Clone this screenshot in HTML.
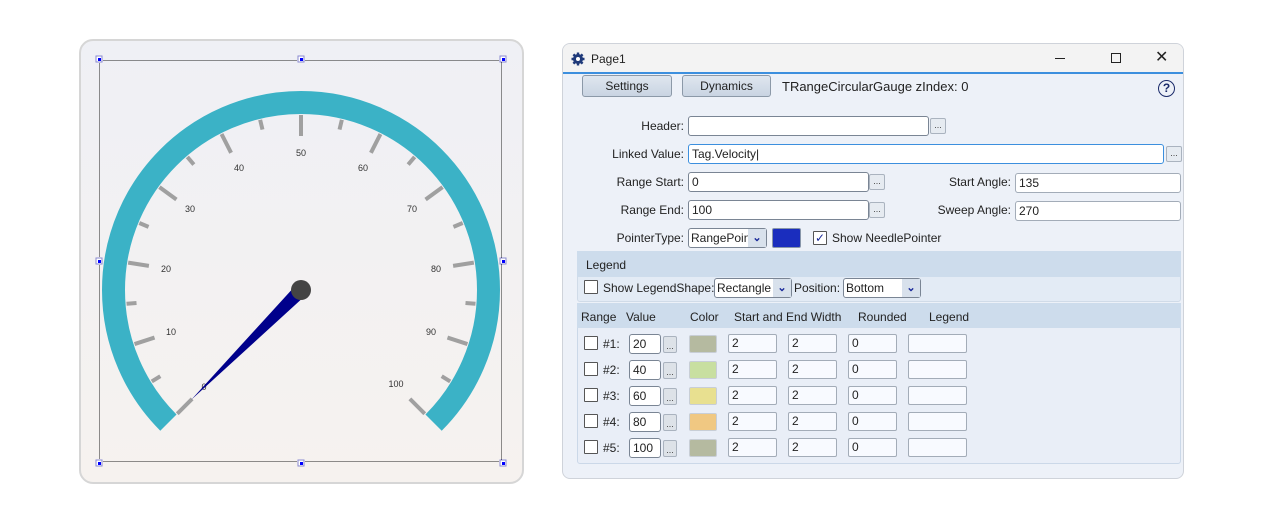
<!DOCTYPE html>
<html><head><meta charset="utf-8"><style>
*{box-sizing:border-box;margin:0;padding:0}
body{width:1263px;height:522px;background:#fff;position:relative;overflow:hidden;font-family:"Liberation Sans",sans-serif;font-size:12px;color:#222}
.a{position:absolute}
.card{left:79px;top:39px;width:445px;height:445px;border:2px solid #d6d6d6;border-radius:14px;background:linear-gradient(#eff0f5,#f6f2ef)}
.win{left:562px;top:43px;width:622px;height:436px;border:1px solid #cfd3da;border-radius:8px;background:#edf1f8;overflow:hidden}
.tb{left:0;top:0;width:620px;height:30px;background:#f3f3f3;border-bottom:2px solid #3c8fde}
.btn{border:1px solid #8c99a8;border-radius:3px;background:linear-gradient(#dfe6ef,#c9d4e2);text-align:center;line-height:20px;font-size:12px}
.inp{border:1px solid #7a8594;border-radius:3px;background:#fff;height:20px;line-height:18px;padding-left:3px;font-size:12px}
.dot{border:1px solid #aab3bf;border-radius:2px;background:#e6ebf1;font-size:9px;text-align:center;line-height:12px;color:#444}
.lbl{text-align:right;line-height:20px}
.cb{width:14px;height:14px;border:1px solid #555;background:#fff;border-radius:1px}
.sel{border:1px solid #7a8594;border-radius:3px;background:#fff;height:20px;line-height:18px;padding-left:2px}
.sel i{position:absolute;right:0;top:0;width:18px;height:18px;background:#d8e1ec;color:#1a2a9a;font-style:normal;text-align:center;font-size:11px;font-weight:bold}
.si{border:1px solid #a3acb8;border-radius:2px;background:#f8faff;height:19px;line-height:17px;padding-left:3px}
.sw{border:1px solid #c8ced6;border-radius:2px;height:18px}
</style></head><body>
<div class="a card"></div>
<svg class="a" style="left:0;top:0" width="530" height="490">
<rect x="99.5" y="60.5" width="402" height="401" fill="none" stroke="#222" stroke-dasharray="1,1"/>
<g fill="#fff" stroke="#8a8ad0">
<rect x="96" y="56" width="6" height="6"/><rect x="298" y="56" width="6" height="6"/><rect x="500" y="56" width="6" height="6"/>
<rect x="96" y="258" width="6" height="6"/><rect x="500" y="258" width="6" height="6"/>
<rect x="96" y="460" width="6" height="6"/><rect x="298" y="460" width="6" height="6"/><rect x="500" y="460" width="6" height="6"/>
</g>
<g fill="#00f"><rect x="98" y="58" width="3" height="3"/><rect x="300" y="58" width="3" height="3"/><rect x="502" y="58" width="3" height="3"/><rect x="98" y="260" width="3" height="3"/><rect x="502" y="260" width="3" height="3"/><rect x="98" y="462" width="3" height="3"/><rect x="300" y="462" width="3" height="3"/><rect x="502" y="462" width="3" height="3"/></g>
<path d="M168.4 422.6 A187.5 187.5 0 1 1 433.6 422.6" fill="none" stroke="#3bb2c6" stroke-width="23"/>
<g stroke="#a0a0a0" stroke-width="4">
<line x1="455" y1="290" x2="476" y2="290" transform="rotate(135 301 290)"/>
<line x1="466" y1="290" x2="476" y2="290" transform="rotate(148.5 301 290)"/>
<line x1="455" y1="290" x2="476" y2="290" transform="rotate(162 301 290)"/>
<line x1="466" y1="290" x2="476" y2="290" transform="rotate(175.5 301 290)"/>
<line x1="455" y1="290" x2="476" y2="290" transform="rotate(189 301 290)"/>
<line x1="466" y1="290" x2="476" y2="290" transform="rotate(202.5 301 290)"/>
<line x1="455" y1="290" x2="476" y2="290" transform="rotate(216 301 290)"/>
<line x1="466" y1="290" x2="476" y2="290" transform="rotate(229.5 301 290)"/>
<line x1="455" y1="290" x2="476" y2="290" transform="rotate(243 301 290)"/>
<line x1="466" y1="290" x2="476" y2="290" transform="rotate(256.5 301 290)"/>
<line x1="455" y1="290" x2="476" y2="290" transform="rotate(270 301 290)"/>
<line x1="466" y1="290" x2="476" y2="290" transform="rotate(283.5 301 290)"/>
<line x1="455" y1="290" x2="476" y2="290" transform="rotate(297 301 290)"/>
<line x1="466" y1="290" x2="476" y2="290" transform="rotate(310.5 301 290)"/>
<line x1="455" y1="290" x2="476" y2="290" transform="rotate(324 301 290)"/>
<line x1="466" y1="290" x2="476" y2="290" transform="rotate(337.5 301 290)"/>
<line x1="455" y1="290" x2="476" y2="290" transform="rotate(351 301 290)"/>
<line x1="466" y1="290" x2="476" y2="290" transform="rotate(364.5 301 290)"/>
<line x1="455" y1="290" x2="476" y2="290" transform="rotate(378 301 290)"/>
<line x1="466" y1="290" x2="476" y2="290" transform="rotate(391.5 301 290)"/>
<line x1="455" y1="290" x2="476" y2="290" transform="rotate(405 301 290)"/>
</g>
<g font-family="Liberation Sans,sans-serif" font-size="9" fill="#333" text-anchor="middle">
<text x="204" y="390">0</text><text x="171" y="335">10</text><text x="166" y="272">20</text><text x="190" y="212">30</text><text x="239" y="171">40</text><text x="301" y="156">50</text><text x="363" y="171">60</text><text x="412" y="212">70</text><text x="436" y="272">80</text><text x="431" y="335">90</text><text x="396" y="387">100</text>
</g>
<polygon points="296,285 306,295 191,400" fill="#00008b"/>
<circle cx="301" cy="290" r="10" fill="#444"/>
</svg>

<div class="a win">
<div class="a tb"></div>
<svg class="a" style="left:8px;top:8px" width="14" height="14" viewBox="0 0 14 14"><circle cx="7" cy="7" r="5" fill="#1f3a7a"/><g stroke="#1f3a7a" stroke-width="2.4"><line x1="7" y1="0.5" x2="7" y2="13.5"/><line x1="0.5" y1="7" x2="13.5" y2="7"/><line x1="2.4" y1="2.4" x2="11.6" y2="11.6"/><line x1="11.6" y1="2.4" x2="2.4" y2="11.6"/></g><circle cx="7" cy="7" r="2" fill="#fff"/></svg>
<div class="a" style="left:28px;top:8px;font-size:12px">Page1</div>
<div class="a" style="left:492px;top:14px;width:10px;height:1px;background:#222"></div>
<div class="a" style="left:548px;top:9px;width:10px;height:10px;border:1px solid #222"></div>
<div class="a" style="left:592px;top:3px;font-size:16px;color:#222">✕</div>

<div class="a btn" style="left:19px;top:31px;width:90px;height:22px">Settings</div>
<div class="a btn" style="left:119px;top:31px;width:89px;height:22px">Dynamics</div>
<div class="a" style="left:219px;top:35px;font-size:13px">TRangeCircularGauge zIndex: 0</div>
<div class="a" style="left:595px;top:36px;width:17px;height:17px;border:1.5px solid #1a2a6a;border-radius:50%;text-align:center;font-size:12px;font-weight:bold;line-height:14px;color:#1a2a6a">?</div>

<div class="a lbl" style="left:0;top:72px;width:121px">Header:</div>
<div class="a inp" style="left:125px;top:72px;width:241px"></div>
<div class="a dot" style="left:367px;top:74px;width:16px;height:16px">...</div>

<div class="a lbl" style="left:0;top:100px;width:121px">Linked Value:</div>
<div class="a inp" style="left:125px;top:100px;width:476px;border-color:#3c8fde">Tag.Velocity|</div>
<div class="a dot" style="left:603px;top:102px;width:16px;height:16px">...</div>

<div class="a lbl" style="left:0;top:128px;width:121px">Range Start:</div>
<div class="a inp" style="left:125px;top:128px;width:181px">0</div>
<div class="a dot" style="left:306px;top:130px;width:16px;height:16px">...</div>
<div class="a lbl" style="left:340px;top:128px;width:108px">Start Angle:</div>
<div class="a inp" style="left:452px;top:129px;width:166px;border-color:#a3acb8">135</div>

<div class="a lbl" style="left:0;top:156px;width:121px">Range End:</div>
<div class="a inp" style="left:125px;top:156px;width:181px">100</div>
<div class="a dot" style="left:306px;top:158px;width:16px;height:16px">...</div>
<div class="a lbl" style="left:340px;top:156px;width:108px">Sweep Angle:</div>
<div class="a inp" style="left:452px;top:157px;width:166px;border-color:#a3acb8">270</div>

<div class="a lbl" style="left:0;top:184px;width:121px">PointerType:</div>
<div class="a sel" style="left:125px;top:184px;width:79px">RangePoin<i>⌄</i></div>
<div class="a" style="left:209px;top:184px;width:29px;height:20px;background:#1a2dbe;border:1px solid #8896aa;border-radius:2px"></div>
<div class="a cb" style="left:250px;top:187px;text-align:center;line-height:12px;font-size:12px;color:#1a2a9a">✓</div>
<div class="a" style="left:269px;top:187px">Show NeedlePointer</div>

<div class="a" style="left:14px;top:207px;width:604px;height:51px;background:#e3ebf5;border:1px solid #d0dbe8;border-radius:3px"></div>
<div class="a" style="left:14px;top:207px;width:604px;height:26px;background:#cddcec"></div>
<div class="a" style="left:23px;top:214px">Legend</div>
<div class="a cb" style="left:21px;top:236px"></div>
<div class="a" style="left:40px;top:237px">Show LegendShape:</div>
<div class="a sel" style="left:151px;top:234px;width:78px">Rectangle<i>⌄</i></div>
<div class="a" style="left:231px;top:237px">Position:</div>
<div class="a sel" style="left:280px;top:234px;width:78px">Bottom<i>⌄</i></div>

<div class="a" style="left:14px;top:259px;width:604px;height:161px;background:#e9eef7;border:1px solid #cbd8e8;border-radius:3px"></div>
<div class="a" style="left:14px;top:259px;width:604px;height:25px;background:#cddcec"></div>
<div class="a" style="left:18px;top:266px">Range</div>
<div class="a" style="left:63px;top:266px">Value</div>
<div class="a" style="left:127px;top:266px">Color</div>
<div class="a" style="left:171px;top:266px">Start and End Width</div>
<div class="a" style="left:295px;top:266px">Rounded</div>
<div class="a" style="left:366px;top:266px">Legend</div>

<!-- rows -->
<div class="a cb" style="left:21px;top:292px"></div><div class="a" style="left:40px;top:293px">#1:</div>
<div class="a inp" style="left:66px;top:290px;width:32px">20</div><div class="a dot" style="left:100px;top:292px;width:14px;height:17px;line-height:18px;background:#dde2e8">...</div>
<div class="a sw" style="left:126px;top:291px;width:28px;background:#b5baa0"></div>
<div class="a si" style="left:165px;top:290px;width:49px">2</div><div class="a si" style="left:225px;top:290px;width:49px">2</div><div class="a si" style="left:285px;top:290px;width:49px">0</div><div class="a si" style="left:345px;top:290px;width:59px"></div>

<div class="a cb" style="left:21px;top:318px"></div><div class="a" style="left:40px;top:319px">#2:</div>
<div class="a inp" style="left:66px;top:316px;width:32px">40</div><div class="a dot" style="left:100px;top:318px;width:14px;height:17px;line-height:18px;background:#dde2e8">...</div>
<div class="a sw" style="left:126px;top:317px;width:28px;background:#c8dfa0"></div>
<div class="a si" style="left:165px;top:316px;width:49px">2</div><div class="a si" style="left:225px;top:316px;width:49px">2</div><div class="a si" style="left:285px;top:316px;width:49px">0</div><div class="a si" style="left:345px;top:316px;width:59px"></div>

<div class="a cb" style="left:21px;top:344px"></div><div class="a" style="left:40px;top:345px">#3:</div>
<div class="a inp" style="left:66px;top:342px;width:32px">60</div><div class="a dot" style="left:100px;top:344px;width:14px;height:17px;line-height:18px;background:#dde2e8">...</div>
<div class="a sw" style="left:126px;top:343px;width:28px;background:#e8e090"></div>
<div class="a si" style="left:165px;top:342px;width:49px">2</div><div class="a si" style="left:225px;top:342px;width:49px">2</div><div class="a si" style="left:285px;top:342px;width:49px">0</div><div class="a si" style="left:345px;top:342px;width:59px"></div>

<div class="a cb" style="left:21px;top:370px"></div><div class="a" style="left:40px;top:371px">#4:</div>
<div class="a inp" style="left:66px;top:368px;width:32px">80</div><div class="a dot" style="left:100px;top:370px;width:14px;height:17px;line-height:18px;background:#dde2e8">...</div>
<div class="a sw" style="left:126px;top:369px;width:28px;background:#f0c882"></div>
<div class="a si" style="left:165px;top:368px;width:49px">2</div><div class="a si" style="left:225px;top:368px;width:49px">2</div><div class="a si" style="left:285px;top:368px;width:49px">0</div><div class="a si" style="left:345px;top:368px;width:59px"></div>

<div class="a cb" style="left:21px;top:396px"></div><div class="a" style="left:40px;top:397px">#5:</div>
<div class="a inp" style="left:66px;top:394px;width:32px">100</div><div class="a dot" style="left:100px;top:396px;width:14px;height:17px;line-height:18px;background:#dde2e8">...</div>
<div class="a sw" style="left:126px;top:395px;width:28px;background:#b5baa0"></div>
<div class="a si" style="left:165px;top:394px;width:49px">2</div><div class="a si" style="left:225px;top:394px;width:49px">2</div><div class="a si" style="left:285px;top:394px;width:49px">0</div><div class="a si" style="left:345px;top:394px;width:59px"></div>
</div>
</body></html>
